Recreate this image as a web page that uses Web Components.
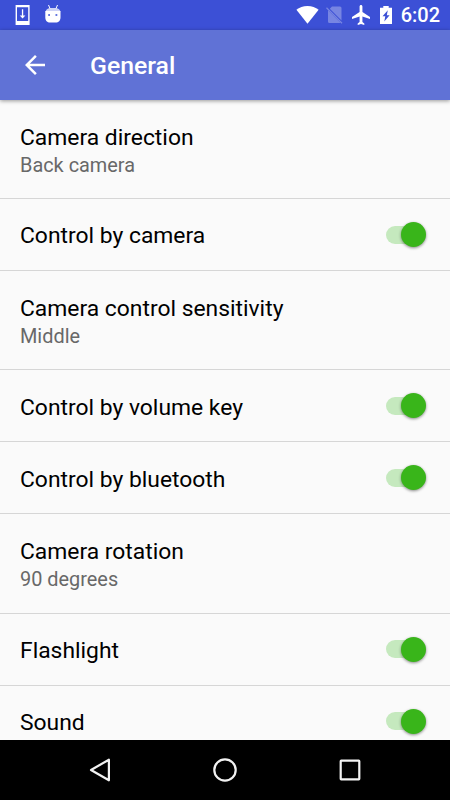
<!DOCTYPE html>
<html lang="en">

<head>
  <meta charset="UTF-8">
  <meta name="viewport" content="width=device-width, initial-scale=1.0">
  <title>General</title>
  <style>
    body {
      margin: 0;
      background: #fafafa;
      font-family: Roboto, "Liberation Sans", sans-serif;
    }
  </style>
</head>

<body>

  <phone-screen>
    <status-bar slot="top" time="6:02"></status-bar>
    <app-bar slot="top">General</app-bar>

    <setting-row summary="Back camera">Camera direction</setting-row>
    <setting-row>Control by camera<toggle-switch slot="widget"></toggle-switch></setting-row>
    <setting-row summary="Middle">Camera control sensitivity</setting-row>
    <setting-row>Control by volume key<toggle-switch slot="widget"></toggle-switch></setting-row>
    <setting-row>Control by bluetooth<toggle-switch slot="widget"></toggle-switch></setting-row>
    <setting-row summary="90 degrees">Camera rotation</setting-row>
    <setting-row>Flashlight<toggle-switch slot="widget"></toggle-switch></setting-row>
    <setting-row>Sound<toggle-switch slot="widget"></toggle-switch></setting-row>

    <nav-bar slot="bottom"></nav-bar>
  </phone-screen>

  <script>

    class PhoneScreen extends HTMLElement {
      constructor() {
        super();
        this.attachShadow({ mode: 'open' });
        this.shadowRoot.innerHTML = `
  <style>
    :host {
      display: flex;
      flex-direction: column;
      width: 450px;
      height: 800px;
      overflow: hidden;
      background: #fafafa;
    }

    .list {
      flex: 1;
      min-height: 0;
      overflow: hidden;
    }
  </style>
  <slot name="top"></slot>
  <div class="list"><slot></slot></div>
  <slot name="bottom"></slot>
        `;
      }
    }

    class StatusBar extends HTMLElement {
      constructor() {
        super();
        this.attachShadow({ mode: 'open' });
      }

      connectedCallback() {
        this.shadowRoot.innerHTML = `
  <style>
    :host {
      display: flex;
      flex: none;
      align-items: center;
      height: 30px;
      padding: 0 10px 0 15px;
      box-sizing: border-box;
      background: #3c50d6;
      color: #fff;
    }

    svg {
      display: block;
      flex: none;
      fill: currentColor;
    }

    .droid {
      margin-left: 14px;
    }

    .right {
      display: flex;
      align-items: center;
      margin-left: auto;
    }

    .sim {
      margin-left: 7px;
      opacity: .3;
    }

    .plane {
      margin-left: 9px;
    }

    .battery {
      margin-left: 10px;
    }

    .time {
      margin-left: 9px;
      font-size: 20px;
      font-weight: 500;
      line-height: 30px;
    }
  </style>
  <svg width="16" height="22" viewBox="0 0 16 22">
    <path fill-rule="evenodd" d="M.600 1h14v20h-14zM2 3.200v13.800h11.200v-13.800z"/>
    <path d="M6.900 5.300h1.300v6.300h2.200l-2.850 2.900-2.850-2.900h2.200z"/>
  </svg>
  <svg class="droid" width="17" height="22" viewBox="0 0 17 22">
    <path d="M3.500 1l1.500 3.500M12.500 1l-1.500 3.500" stroke="#fff" stroke-width="1"/>
    <path d="M.6 7.500C1 5.300 3.300 4 5.500 4h5c2.200 0 4.500 1.300 4.900 3.500z" opacity=".75"/>
    <path d="M.3 7h15.200v6.500c0 3-2 5-4.700 5H5c-2.700 0-4.700-2-4.700-5z"/>
    <path d="M3.200 10h1.800v2H3.200zM10.500 10h1.800v2h-1.800z" fill="#6577df"/>
  </svg>
  <div class="right">
    <svg width="23" height="20" viewBox="0 0 23 20">
      <path d="M.4 4.800C3.500 2.200 7 .9 11.500.9s8 1.300 11.100 3.900l-11.100 14z"/>
    </svg>
    <svg class="sim" width="17" height="18" viewBox="0 0 17 18">
      <path d="M6 .5h8q1.500 0 1.500 1.500v12.500L3.800 2.800zM2 4.200L14.700 17H3.500Q2 17 2 15.500z"/>
      <path d="M.5 1.700L16 17.200" stroke="#fff" stroke-width="1.300"/>
    </svg>
    <svg class="plane" width="18" height="20" viewBox="2 2 19 20" preserveAspectRatio="none">
      <path d="M21 16v-2l-8-5V3.500c0-.83-.67-1.500-1.500-1.500S10 2.670 10 3.500V9l-8 5v2l8-2.500V19l-2 1.500V22l3.500-1 3.500 1v-1.500L13 19v-5.500l8 2.500z"/>
    </svg>
    <svg class="battery" width="12" height="18" viewBox="0 0 12 18">
      <path fill-rule="evenodd" d="M3.300 0h5.400v1.800H12V18H0V1.800h3.300zM7.800 4.200L2.500 10.300h2.800l-1 5.200 5.300-6.300H6.800z"/>
    </svg>
    <span class="time">${this.getAttribute('time')}</span>
  </div>
        `;
      }
    }

    class AppBar extends HTMLElement {
      constructor() {
        super();
        this.attachShadow({ mode: 'open' });
        this.shadowRoot.innerHTML = `
  <style>
    :host {
      display: flex;
      flex: none;
      align-items: center;
      height: 70px;
      padding-left: 20px;
      box-sizing: border-box;
      background: #6072d6;
      box-shadow: 0 1px 4px rgba(0, 0, 0, .4);
      color: #fff;
      z-index: 1;
    }

    svg {
      display: block;
      fill: #fff;
    }

    .title {
      margin: 2px 0 0 40px;
      font-size: 24.8px;
      font-weight: 500;
      line-height: 30px;
    }
  </style>
  <svg width="30" height="30" viewBox="0 0 24 24">
    <path d="M20 11H7.830l5.590-5.590L12 4l-8 8 8 8 1.410-1.410L7.830 13H20v-2z"/>
  </svg>
  <div class="title"><slot></slot></div>
        `;
      }
    }

    class SettingRow extends HTMLElement {
      constructor() {
        super();
        this.attachShadow({ mode: 'open' });
      }

      connectedCallback() {
        const summary = this.getAttribute('summary');

        this.shadowRoot.innerHTML = `
  <style>
    :host {
      display: flex;
      align-items: center;
      justify-content: space-between;
      height: ${summary ? 99.2 : 72}px;
      padding: 0 24px 0 20px;
      box-sizing: border-box;
      border-bottom: 1px solid #d6d6d6;
    }

    .title {
      font-size: 22.85px;
      line-height: 28px;
      color: #000;
      margin-top: ${summary ? 3.9 : 3.5}px;
    }

    .summary {
      font-size: 19.9px;
      line-height: 24px;
      margin-top: 2.1px;
      color: #686868;
    }
  </style>
  <div>
    <div class="title"><slot></slot></div>
    ${summary ? `<div class="summary">${summary}</div>` : ''}
  </div>
  <slot name="widget"></slot>
        `;
      }
    }

    class ToggleSwitch extends HTMLElement {
      constructor() {
        super();
        this.attachShadow({ mode: 'open' });
        this.shadowRoot.innerHTML = `
  <style>
    :host {
      display: flex;
      flex: none;
      align-items: center;
      justify-content: flex-end;
      width: 35px;
      height: 18px;
      margin-right: 5px;
      border-radius: 9px;
      background: #c5e9be;
    }

    .thumb {
      flex: none;
      width: 25px;
      height: 25px;
      margin-right: -5px;
      border-radius: 50%;
      background: #39b51a;
      box-shadow: 0 1px 3px rgba(0, 0, 0, .45);
    }
  </style>
  <div class="thumb"></div>
        `;
      }
    }

    class NavBar extends HTMLElement {
      constructor() {
        super();
        this.attachShadow({ mode: 'open' });
        this.shadowRoot.innerHTML = `
  <style>
    :host {
      display: flex;
      flex: none;
      align-items: center;
      justify-content: center;
      gap: 95px;
      height: 60px;
      background: #000;
      z-index: 1;
    }

    svg {
      display: block;
      fill: none;
      stroke: #f2f2f2;
      stroke-width: 2.200;
      stroke-linejoin: round;
    }
  </style>
  <svg width="30" height="30" viewBox="0 0 30 30"><path d="M6 15L23.900 4.700v20.600z"/></svg>
  <svg width="30" height="30" viewBox="0 0 30 30"><circle cx="15" cy="15" r="10.700"/></svg>
  <svg width="30" height="30" viewBox="0 0 30 30"><rect x="5.700" y="5.700" width="18.600" height="18.600" rx=".5"/></svg>
        `;
      }
    }

    customElements.define('phone-screen', PhoneScreen);
    customElements.define('status-bar', StatusBar);
    customElements.define('app-bar', AppBar);
    customElements.define('setting-row', SettingRow);
    customElements.define('toggle-switch', ToggleSwitch);
    customElements.define('nav-bar', NavBar);
  </script>
</body>

</html>
